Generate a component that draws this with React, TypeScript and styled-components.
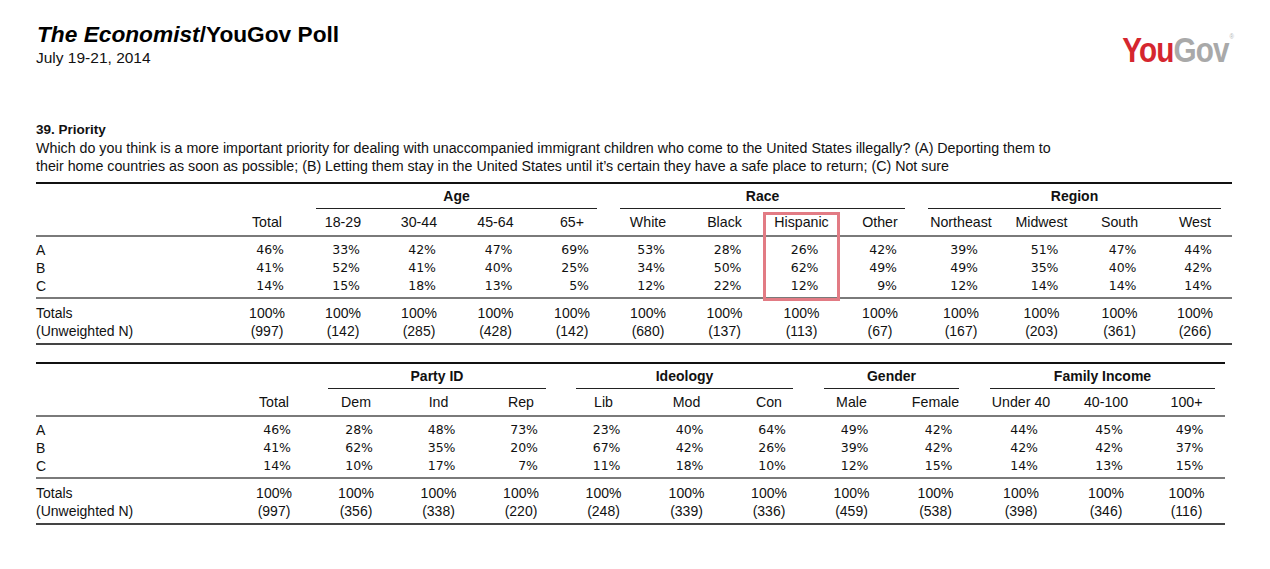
import React from "react";
import styled, { createGlobalStyle } from "styled-components";

const GlobalStyle = createGlobalStyle`
  html, body { margin: 0; padding: 0; background: #fff; }
  body { font-family: "Liberation Sans", Arial, sans-serif; color: #111; }
`;

const Page = styled.div`
  width: 1270px;
  height: 569px;
  box-sizing: border-box;
  padding: 21px 36px 0 36px;
  overflow: hidden;
`;

const Header = styled.header`
  display: flex;
  justify-content: space-between;
  align-items: flex-start;
`;

const TitleBlock = styled.div`
  display: flex;
  flex-direction: column;
`;

const Title = styled.h1`
  margin: 0;
  padding-left: 1px;
  font-size: 22.7px;
  line-height: 26px;
  font-weight: 700;
  color: #000;
  em { font-style: italic; }
`;

const DateLine = styled.div`
  margin-top: 2px;
  font-size: 15.5px;
  line-height: 18px;
`;

const Logo = styled.div`
  margin-top: 12px;
  font-size: 34.5px;
  line-height: 34px;
  font-weight: 700;
  letter-spacing: -1px;
  transform: scaleX(0.86);
  transform-origin: right top;
  white-space: nowrap;
`;

const LogoPart = styled.span<{ $tone: "red" | "grey" }>`
  color: ${(p) => (p.$tone === "red" ? "#d5262f" : "#a9a9a9")};
`;

const Registered = styled.span`
  font-size: 7px;
  line-height: 7px;
  vertical-align: top;
  color: #b5b5b5;
  letter-spacing: 0;
  margin-left: 1px;
  font-weight: 400;
`;

const Question = styled.section`
  margin-top: 54px;
  font-size: 14.25px;
  line-height: 18px;
`;

const QTitle = styled.div`
  font-weight: 700;
  font-size: 13.5px;
`;

const QText = styled.p`
  margin: 0;
  white-space: nowrap;
`;

const Frame = styled.div<{ $width: number; $gap: number }>`
  position: relative;
  width: ${(p) => p.$width}px;
  margin-top: ${(p) => p.$gap}px;
  border-top: 2px solid #111;
  border-bottom: 2px solid #444;
`;

const Row = styled.div<{ $cols: string }>`
  display: grid;
  grid-template-columns: ${(p) => p.$cols};
`;

const HeaderRow = styled(Row)`
  border-bottom: 2px solid #7a7a7a;
  font-size: 14.2px;
  line-height: 26px;
`;

const Section = styled.div<{ $top: number; $bottom: number; $rule?: boolean }>`
  padding: ${(p) => p.$top}px 0 ${(p) => p.$bottom}px;
  ${(p) => (p.$rule ? "border-bottom: 2px solid #7a7a7a;" : "")}
`;

const BodyRow = styled(Row)`
  height: 18px;
  font-size: 14px;
  line-height: 18px;
`;

const Spacer = styled.div<{ $span: number }>`
  grid-column: span ${(p) => p.$span};
`;

const GroupCell = styled.div<{ $span: number; $inL: number; $inR: number }>`
  grid-column: span ${(p) => p.$span};
  margin: 0 ${(p) => p.$inR}px 0 ${(p) => p.$inL}px;
  border-bottom: 1px solid #222;
  text-align: center;
  font-size: 14px;
  font-weight: 700;
  line-height: 24px;
`;

const HeadCell = styled.div`
  text-align: center;
  white-space: nowrap;
`;

const Label = styled.div`
  white-space: nowrap;
`;

const PctCell = styled.div`
  display: flex;
  justify-content: center;
`;

const Pct = styled.div`
  width: 34px;
  text-align: right;
  font-family: "DejaVu Sans", "Liberation Sans", sans-serif;
  font-size: 12.5px;
  line-height: 18px;
  white-space: nowrap;
`;

const TotalCell = styled.div`
  text-align: center;
  white-space: nowrap;
`;

const Highlight = styled.div`
  position: absolute;
  top: 28px;
  height: 89px;
  box-sizing: border-box;
  border: 3px solid #e27b84;
  pointer-events: none;
`;

type Group = { title: string; span: number; inset: [number, number] };
type TableData = {
  widths: number[];
  groups: Group[];
  headers: string[];
  rows: { label: string; values: number[] }[];
  n: number[];
  highlight?: number;
};

const table1: TableData = {
  widths: [193, 76, 76, 76, 77, 76, 76, 77, 77, 80, 82, 79, 77, 74],
  groups: [
    { title: "Age", span: 4, inset: [11, 13] },
    { title: "Race", span: 4, inset: [10, 15] },
    { title: "Region", span: 4, inset: [8, 11] },
  ],
  headers: ["Total", "18-29", "30-44", "45-64", "65+", "White", "Black", "Hispanic", "Other", "Northeast", "Midwest", "South", "West"],
  rows: [
    { label: "A", values: [46, 33, 42, 47, 69, 53, 28, 26, 42, 39, 51, 47, 44] },
    { label: "B", values: [41, 52, 41, 40, 25, 34, 50, 62, 49, 49, 35, 40, 42] },
    { label: "C", values: [14, 15, 18, 13, 5, 12, 22, 12, 9, 12, 14, 14, 14] },
  ],
  n: [997, 142, 285, 428, 142, 680, 137, 113, 67, 167, 203, 361, 266],
  highlight: 7,
};

const table2: TableData = {
  widths: [197, 82, 82, 83, 82, 83, 83, 82, 83, 85, 86, 84, 77],
  groups: [
    { title: "Party ID", span: 3, inset: [13, 16] },
    { title: "Ideology", span: 3, inset: [14, 17] },
    { title: "Gender", span: 2, inset: [14, 19] },
    { title: "Family Income", span: 3, inset: [12, 10] },
  ],
  headers: ["Total", "Dem", "Ind", "Rep", "Lib", "Mod", "Con", "Male", "Female", "Under 40", "40-100", "100+"],
  rows: [
    { label: "A", values: [46, 28, 48, 73, 23, 40, 64, 49, 42, 44, 45, 49] },
    { label: "B", values: [41, 62, 35, 20, 67, 42, 26, 39, 42, 42, 42, 37] },
    { label: "C", values: [14, 10, 17, 7, 11, 18, 10, 12, 15, 14, 13, 15] },
  ],
  n: [997, 356, 338, 220, 248, 339, 336, 459, 538, 398, 346, 116],
};

function CrossTable({ data, gap }: { data: TableData; gap: number }) {
  const cols = data.widths.map((w) => `${w}px`).join(" ");
  const width = data.widths.reduce((a, b) => a + b, 0);
  const hlLeft =
    data.highlight !== undefined
      ? data.widths.slice(0, data.highlight + 1).reduce((a, b) => a + b, 0)
      : 0;
  return (
    <Frame $width={width} $gap={gap}>
      <Row $cols={cols}>
        <Spacer $span={2} />
        {data.groups.map((g) => (
          <GroupCell key={g.title} $span={g.span} $inL={g.inset[0]} $inR={g.inset[1]}>
            {g.title}
          </GroupCell>
        ))}
      </Row>
      <HeaderRow $cols={cols}>
        <Label />
        {data.headers.map((h) => (
          <HeadCell key={h}>{h}</HeadCell>
        ))}
      </HeaderRow>
      <Section $top={4} $bottom={2} $rule>
        {data.rows.map((r) => (
          <BodyRow key={r.label} $cols={cols}>
            <Label>{r.label}</Label>
            {r.values.map((v, i) => (
              <PctCell key={i}>
                <Pct>{v}%</Pct>
              </PctCell>
            ))}
          </BodyRow>
        ))}
      </Section>
      <Section $top={5} $bottom={3}>
        <BodyRow $cols={cols}>
          <Label>Totals</Label>
          {data.n.map((_, i) => (
            <TotalCell key={i}>100%</TotalCell>
          ))}
        </BodyRow>
        <BodyRow $cols={cols}>
          <Label>(Unweighted N)</Label>
          {data.n.map((v, i) => (
            <TotalCell key={i}>({v})</TotalCell>
          ))}
        </BodyRow>
      </Section>
      {data.highlight !== undefined && (
        <Highlight style={{ left: hlLeft, width: data.widths[data.highlight + 1] }} />
      )}
    </Frame>
  );
}

export default function App() {
  return (
    <>
      <GlobalStyle />
      <Page>
        <Header>
          <TitleBlock>
            <Title>
              <em>The Economist</em>/YouGov Poll
            </Title>
            <DateLine>July 19-21, 2014</DateLine>
          </TitleBlock>
          <Logo>
            <LogoPart $tone="red">You</LogoPart>
            <LogoPart $tone="grey">Gov</LogoPart>
            <Registered>®</Registered>
          </Logo>
        </Header>
        <Question>
          <QTitle>39. Priority</QTitle>
          <QText>
            Which do you think is a more important priority for dealing with unaccompanied immigrant children who come to the United States illegally? (A) Deporting them to
          </QText>
          <QText>
            their home countries as soon as possible; (B) Letting them stay in the United States until it’s certain they have a safe place to return; (C) Not sure
          </QText>
        </Question>
        <CrossTable data={table1} gap={7} />
        <CrossTable data={table2} gap={17} />
      </Page>
    </>
  );
}
